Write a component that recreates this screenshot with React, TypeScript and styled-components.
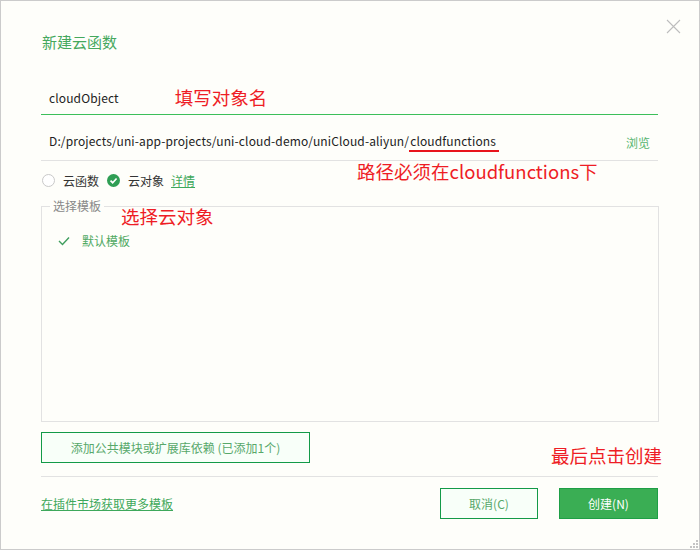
import React from "react";
import styled, { createGlobalStyle } from "styled-components";

const Global = createGlobalStyle`
  html, body { margin: 0; padding: 0; background: #fefefa; }
  body { font-family: "Noto Sans CJK SC", "Open Sans", sans-serif; }
`;

const Window = styled.div`
  position: relative;
  box-sizing: border-box;
  width: 700px;
  height: 550px;
  border: 1px solid #cbcbcb;
  background: #fefefa;
  padding: 31px 41px 0 40px;
  display: flex;
  flex-direction: column;
  font-family: "Noto Sans CJK SC", sans-serif;
  font-size: 12px;
  color: #333;
`;

const Title = styled.div`
  font-size: 15px;
  line-height: 20px;
  color: #45a85d;
  padding-left: 1px;
`;

const Close = styled.button`
  position: absolute;
  top: 18px;
  right: 18px;
  width: 15px;
  height: 15px;
  padding: 0;
  border: 0;
  background: transparent;
  display: flex;
  cursor: pointer;
`;

const Annotation = styled.span`
  color: #ee1d25;
  font-size: 18.5px;
  line-height: 24px;
  white-space: nowrap;
  letter-spacing: 0;
`;

const Floating = styled(Annotation)<{ $left: number; $top: number }>`
  position: absolute;
  left: ${(p) => p.$left}px;
  top: ${(p) => p.$top}px;
`;

const InputRow = styled.div`
  margin-top: 28px;
  height: 34px;
  border-bottom: 1px solid #3cbf5a;
  display: flex;
  align-items: center;
  gap: 56px;
  padding-left: 8px;
`;

const LatinText = styled.span`
  color: #222;
  font-size: 12px;
  letter-spacing: 0.13px;
  white-space: nowrap;
`;

const PathRow = styled.div`
  position: relative;
  padding-top: 9px;
  height: 36px;
  border-bottom: 1px solid #e2e2e2;
  display: flex;
  align-items: center;
  justify-content: space-between;
  padding-left: 8px;
  padding-right: 8px;
`;

const Marked = styled.span`
  display: inline-block;
  line-height: 16px;
  border-bottom: 2px solid #e8141c;
  padding: 0 3px 1px 1px;
`;

const Browse = styled.span`
  color: #55b56e;
`;

const RadioRow = styled.div`
  height: 38px;
  display: flex;
  align-items: center;
  gap: 8px;
  padding-left: 1px;
`;

const RadioItem = styled.label`
  display: flex;
  align-items: center;
  gap: 8px;
  color: #333;
`;

const EmptyRadio = styled.span`
  box-sizing: border-box;
  width: 13px;
  height: 13px;
  border-radius: 50%;
  border: 1px solid #c9c9c9;
  background: #fff;
`;

const Detail = styled.a`
  color: #3ea85b;
  text-decoration: underline;
  margin-left: -1px;
`;

const Templates = styled.fieldset`
  position: relative;
  margin: -1px 0 0 0;
  padding: 0;
  height: 224px;
  box-sizing: border-box;
  border: 1px solid #e2e2e2;
  width: 618px;
  min-width: 0;
`;

const Legend = styled.legend`
  margin-left: 8px;
  padding: 0 3px;
  color: #888;
  font-size: 12px;
  line-height: 16px;
`;

const TemplateItem = styled.div`
  display: flex;
  align-items: center;
  gap: 12px;
  padding: 17px 0 0 16px;
  color: #4fa962;
  line-height: 20px;
`;

const AddRow = styled.div`
  position: relative;
  margin-top: 10px;
  display: flex;
`;

const OutlineButton = styled.button<{ $width: number }>`
  box-sizing: border-box;
  width: ${(p) => p.$width}px;
  height: 31px;
  border: 1px solid #139a48;
  background: #f8fff9;
  color: #57a86a;
  font-family: inherit;
  font-size: 12px;
  padding: 0;
  cursor: pointer;
`;

const PrimaryButton = styled(OutlineButton)`
  background: #3aae54;
  border-color: #1e9f46;
  color: #fff;
`;

const Divider = styled.div`
  margin-top: 13px;
  height: 1px;
  background: #e2e2e2;
`;

const Footer = styled.div`
  margin-top: 11px;
  display: flex;
  align-items: center;
`;

const MarketLink = styled.a`
  color: #3ea85b;
  text-decoration: underline;
  margin-right: auto;
`;

const Buttons = styled.div`
  display: flex;
  gap: 21px;
`;

const Grip = styled.svg`
  position: absolute;
  right: 1px;
  bottom: 1px;
`;

export default function App() {
  return (
    <>
      <Global />
      <Window>
        <Title>新建云函数</Title>
        <Close aria-label="close">
          <svg width="15" height="15" viewBox="0 0 15 15">
            <path d="M1 1 L14 14 M14 1 L1 14" stroke="#bdbdbd" strokeWidth="1.1" />
          </svg>
        </Close>

        <InputRow>
          <LatinText>cloudObject</LatinText>
          <Annotation>填写对象名</Annotation>
        </InputRow>

        <PathRow>
          <LatinText>
            D:/projects/uni-app-projects/uni-cloud-demo/uniCloud-aliyun/
            <Marked>cloudfunctions</Marked>
          </LatinText>
          <Browse>浏览</Browse>
          <Floating $left={316} $top={44}>路径必须在cloudfunctions下</Floating>
        </PathRow>

        <RadioRow>
          <RadioItem>
            <EmptyRadio />
            云函数
          </RadioItem>
          <RadioItem>
            <svg width="13" height="13" viewBox="0 0 14 14">
              <circle cx="7" cy="7" r="7" fill="#2f9e54" />
              <path d="M3.8 7.2 L6.1 9.4 L10.3 4.9" stroke="#fff" strokeWidth="1.8" fill="none" />
            </svg>
            云对象
          </RadioItem>
          <Detail>详情</Detail>
        </RadioRow>

        <Templates>
          <Legend>选择模板</Legend>
          <Floating $left={79} $top={-10}>选择云对象</Floating>
          <TemplateItem>
            <svg width="12" height="10" viewBox="0 0 12 10">
              <path d="M1 5 L4.5 8.5 L11 1.5" stroke="#3f9e5e" strokeWidth="1.4" fill="none" />
            </svg>
            默认模板
          </TemplateItem>
        </Templates>

        <AddRow>
          <OutlineButton $width={269}>添加公共模块或扩展库依赖 (已添加1个)</OutlineButton>
          <Floating $left={510} $top={11}>最后点击创建</Floating>
        </AddRow>

        <Divider />

        <Footer>
          <MarketLink>在插件市场获取更多模板</MarketLink>
          <Buttons>
            <OutlineButton $width={98}>取消(C)</OutlineButton>
            <PrimaryButton $width={99}>创建(N)</PrimaryButton>
          </Buttons>
        </Footer>

        <Grip width="10" height="10" viewBox="0 0 10 10">
          <g fill="#c4c4c4">
            <rect x="8" y="2" width="2" height="2" />
            <rect x="5" y="5" width="2" height="2" />
            <rect x="8" y="5" width="2" height="2" />
            <rect x="2" y="8" width="2" height="2" />
            <rect x="5" y="8" width="2" height="2" />
            <rect x="8" y="8" width="2" height="2" />
          </g>
        </Grip>
      </Window>
    </>
  );
}
